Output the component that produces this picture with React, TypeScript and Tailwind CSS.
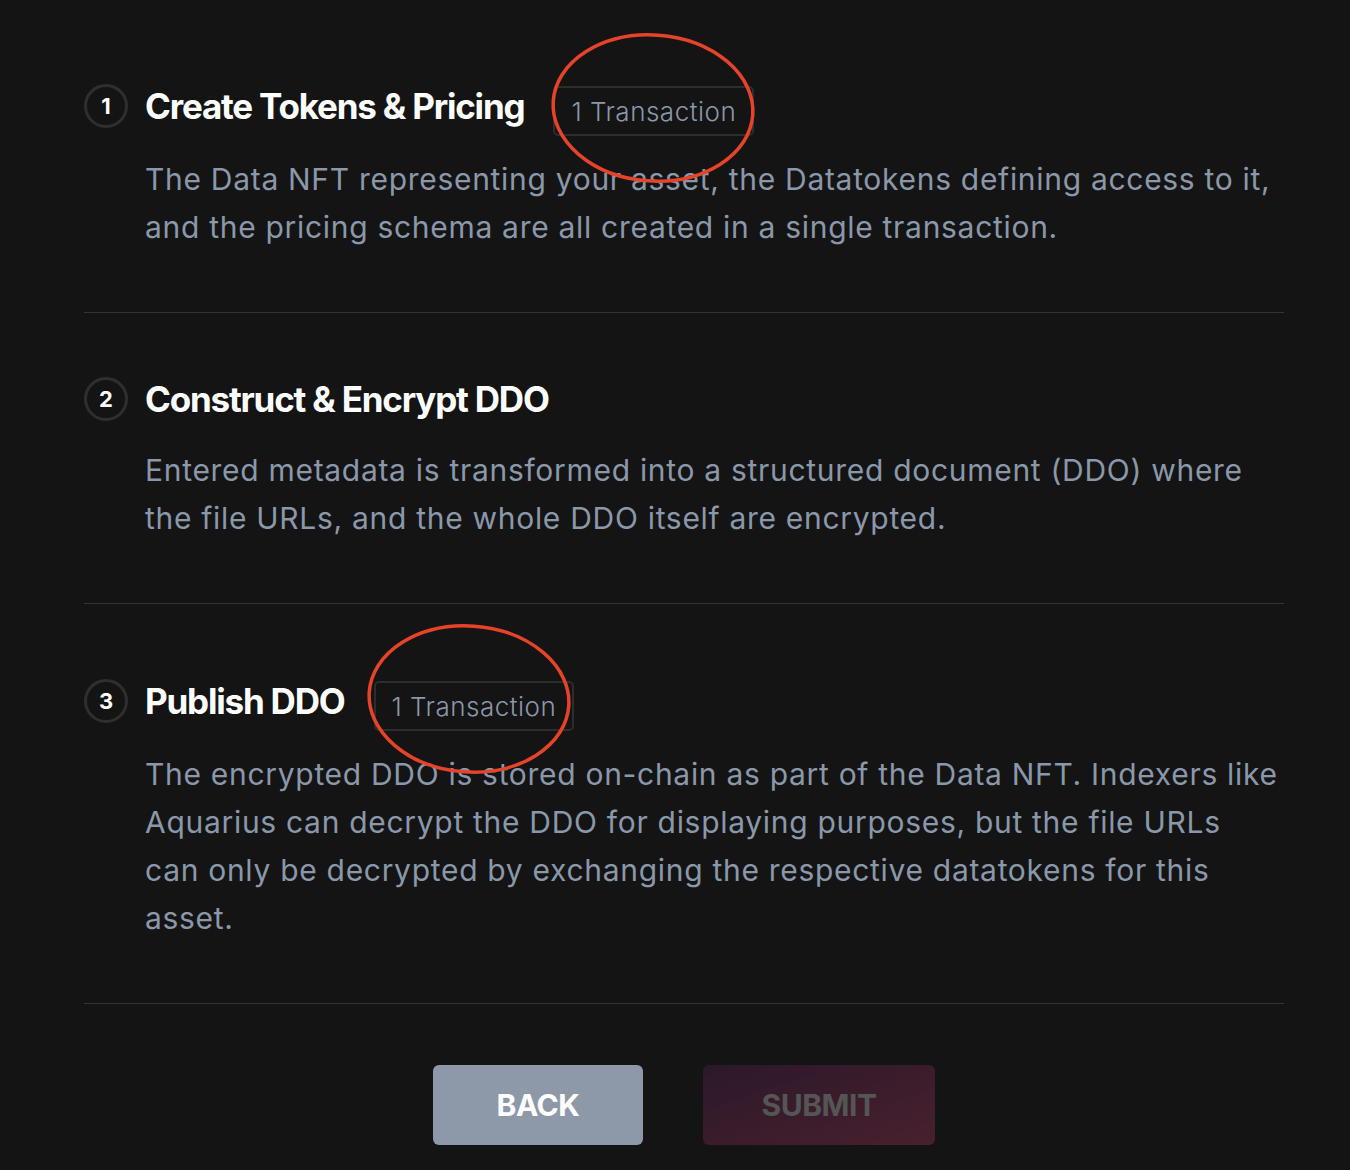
const steps = [
  {
    n: 1,
    title: 'Create Tokens & Pricing',
    tx: true,
    text: 'The Data NFT representing your asset, the Datatokens defining access to it, and the pricing schema are all created in a single transaction.',
    pad: 'pt-[84px] pb-[61px]',
    gap: 'mt-[27px]',
  },
  {
    n: 2,
    title: 'Construct & Encrypt DDO',
    tx: false,
    text: 'Entered metadata is transformed into a structured document (DDO) where the file URLs, and the whole DDO itself are encrypted.',
    pad: 'pt-[64px] pb-[61px]',
    gap: 'mt-[25px]',
  },
  {
    n: 3,
    title: 'Publish DDO',
    tx: true,
    text: 'The encrypted DDO is stored on-chain as part of the Data NFT. Indexers like Aquarius can decrypt the DDO for displaying purposes, but the file URLs can only be decrypted by exchanging the respective datatokens for this asset.',
    pad: 'pt-[75px] pb-[61px]',
    gap: 'mt-[27px]',
  },
];

function Ring({ className }: { className: string }) {
  return (
    <svg className={`absolute pointer-events-none ${className}`} viewBox="0 0 210 156" fill="none">
      <ellipse cx="105" cy="78" rx="100" ry="73" stroke="#e5432a" strokeWidth="3.5" transform="rotate(4 105 78)" />
    </svg>
  );
}

export default function App() {
  return (
    <div className="min-h-[1170px] w-full bg-[#141414] font-['Inter',sans-serif] relative">
      <div className="px-[84px] w-[1368px]">
        {steps.map((s) => (
          <section key={s.n} className={`${s.pad} border-b border-[#333333]`}>
            <div className="flex items-center h-[44px]">
              <div className="w-[44px] h-[44px] rounded-full border-[3px] border-[#2f2f2f] flex items-center justify-center text-white text-[22px] font-bold shrink-0">
                {s.n}
              </div>
              <h2 className="ml-[17px] text-white text-[35px] font-bold tracking-[-1.2px] leading-[44px]">{s.title}</h2>
              {s.tx && (
                <div className="ml-[29px] translate-y-[5px] h-[50px] px-[16px] flex items-center border-2 border-[#2d2d2d] rounded-[5px] text-[#8b98a9] text-[26px] font-light tracking-[0.5px]">
                  1 Transaction
                </div>
              )}
            </div>
            <p className={`${s.gap} pl-[61px] pr-[4px] text-[#8b98a9] text-[30px] leading-[48px] tracking-[0.7px]`}>{s.text}</p>
          </section>
        ))}
        <div className="flex justify-center gap-[60px] pt-[61px]">
          <button className="w-[210px] h-[80px] rounded-[6px] bg-[#8d99a8] text-white text-[30px] font-bold tracking-[-0.5px]">BACK</button>
          <button className="w-[232px] h-[80px] rounded-[6px] bg-gradient-to-br from-[#2c1829] to-[#48202f] text-[#555555] text-[30px] font-bold tracking-[-0.5px]">SUBMIT</button>
        </div>
      </div>
      <Ring className="left-[548px] top-[30px] w-[210px] h-[156px]" />
      <Ring className="left-[364px] top-[620px] w-[210px] h-[158px]" />
    </div>
  );
}
